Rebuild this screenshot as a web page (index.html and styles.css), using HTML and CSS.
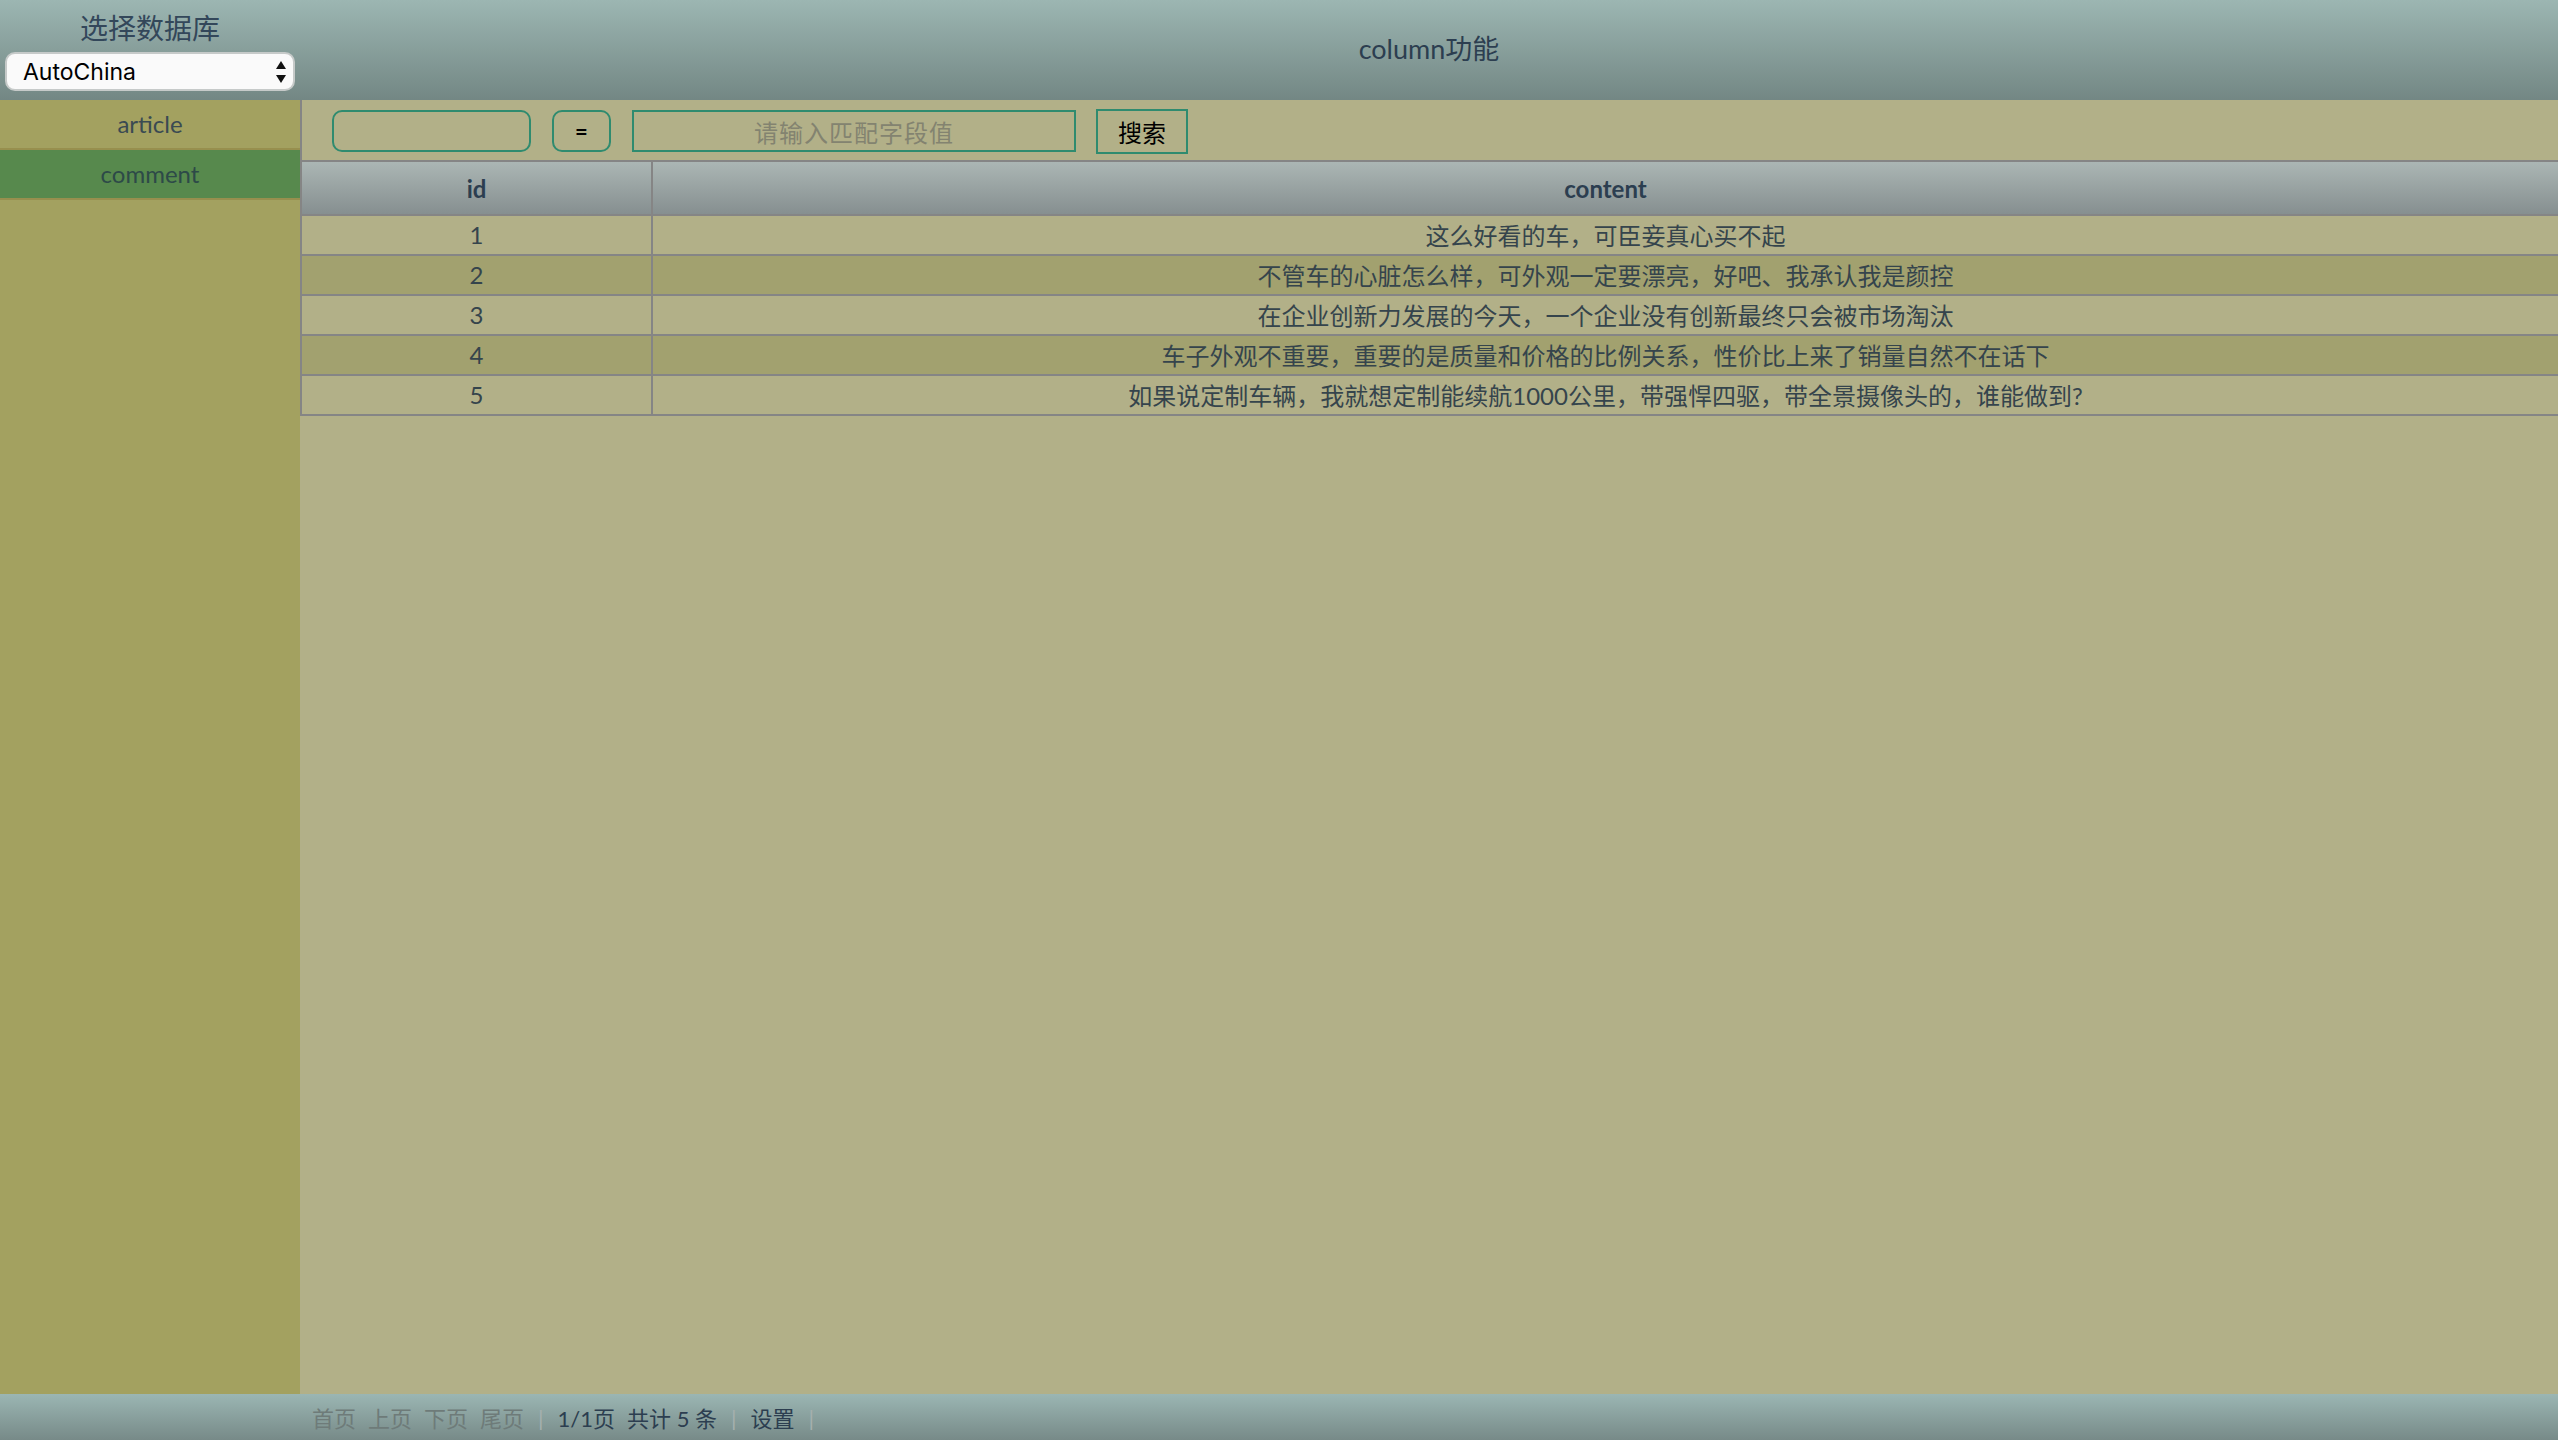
FILE: index.html
```html
<!DOCTYPE html>
<html lang="zh-CN">
<head>
<meta charset="utf-8">
<title>column功能</title>
<link rel="stylesheet" href="styles.css">
</head>
<body>
<div class="app">
  <header class="topbar">
    <div class="db-picker">
      <div class="db-label">选择数据库</div>
      <div class="select-wrap">
        <select class="db-select"><option>AutoChina</option></select>
        <svg class="select-arrows" width="10" height="22" viewBox="0 0 10 22"><polygon points="0,8 5,0 10,8"/><polygon points="0,14 10,14 5,22"/></svg>
      </div>
    </div>
    <h1 class="page-title">column功能</h1>
  </header>
  <div class="content">
    <nav class="sidebar">
      <div class="side-item">article</div>
      <div class="side-item active">comment</div>
    </nav>
    <main class="main">
      <div class="toolbar">
        <input class="field-input" type="text">
        <button class="op-btn">=</button>
        <input class="value-input" type="text" placeholder="请输入匹配字段值">
        <button class="search-btn">搜索</button>
      </div>
      <table class="data-table">
        <thead>
          <tr><th class="col-id">id</th><th>content</th></tr>
        </thead>
        <tbody>
          <tr><td class="col-id">1</td><td>这么好看的车，可臣妾真心买不起</td></tr>
          <tr><td class="col-id">2</td><td>不管车的心脏怎么样，可外观一定要漂亮，好吧、我承认我是颜控</td></tr>
          <tr><td class="col-id">3</td><td>在企业创新力发展的今天，一个企业没有创新最终只会被市场淘汰</td></tr>
          <tr><td class="col-id">4</td><td>车子外观不重要，重要的是质量和价格的比例关系，性价比上来了销量自然不在话下</td></tr>
          <tr><td class="col-id">5</td><td>如果说定制车辆，我就想定制能续航1000公里，带强悍四驱，带全景摄像头的，谁能做到?</td></tr>
        </tbody>
      </table>
    </main>
  </div>
  <footer class="pager">
    <span class="off">首页</span>
    <span class="off">上页</span>
    <span class="off">下页</span>
    <span class="off">尾页</span>
    <span class="sep">|</span>
    <span class="on">1/1页</span>
    <span class="on">共计 5 条</span>
    <span class="sep">|</span>
    <span class="on">设置</span>
    <span class="sep">|</span>
  </footer>
</div>
</body>
</html>
```

FILE: styles.css
```css
html, body {
  margin: 0;
  height: 100%;
}

body {
  font-family: Lato, "Noto Sans CJK SC", sans-serif;
  color: #2c3e50;
}

.app {
  display: flex;
  flex-direction: column;
  height: 100vh;
}

.topbar {
  height: 100px;
  flex: none;
  display: flex;
  background: linear-gradient(#9cb6b2, #738784);
}

.db-picker {
  width: 300px;
  flex: none;
  display: flex;
  flex-direction: column;
  align-items: center;
  padding-top: 8px;
  box-sizing: border-box;
}

.db-label {
  font-size: 28px;
  line-height: 40px;
  color: #33475a;
}

.select-wrap {
  position: relative;
  margin-top: 4px;
  width: 290px;
  height: 39px;
}

.db-select {
  appearance: none;
  -webkit-appearance: none;
  width: 100%;
  height: 100%;
  box-sizing: border-box;
  border: 2px solid #c6cac9;
  border-radius: 10px;
  background: #fafafa;
  color: #000;
  font-family: Inter, "Liberation Sans", sans-serif;
  font-size: 23px;
  padding: 0 0 0 16px;
  outline: none;
}

.select-arrows {
  position: absolute;
  right: 9px;
  top: 9px;
  fill: #111;
  pointer-events: none;
}

.page-title {
  flex: 1;
  margin: 0;
  padding-bottom: 5px;
  display: flex;
  align-items: center;
  justify-content: center;
  font-size: 27px;
  font-weight: 400;
  color: #2c3e50;
}

.content {
  flex: 1;
  display: flex;
  min-height: 0;
}

.sidebar {
  width: 300px;
  flex: none;
  background: #a3a160;
}

.side-item {
  height: 50px;
  line-height: 48px;
  box-sizing: border-box;
  border-bottom: 2px solid #978f4e;
  text-align: center;
  font-size: 24px;
  color: #3a4a52;
}

.side-item.active {
  background: #57894d;
  color: #2d4a48;
}

.main {
  flex: 1;
  min-width: 0;
  background: #b2b088;
  display: flex;
  flex-direction: column;
}

.toolbar {
  height: 62px;
  flex: none;
  box-sizing: border-box;
  border-left: 2px solid #858585;
  border-bottom: 2px solid #858585;
  display: flex;
  align-items: center;
  gap: 21px;
  padding: 2px 0 0 30px;
}

.field-input,
.op-btn,
.value-input,
.search-btn {
  box-sizing: border-box;
  border: 2px solid #2f8b6f;
  background: transparent;
  margin: 0;
  outline: none;
}

.field-input {
  width: 199px;
  height: 42px;
  border-radius: 10px;
}

.op-btn {
  width: 59px;
  height: 42px;
  border-radius: 10px;
  font-family: Lato, sans-serif;
  font-size: 22px;
  font-weight: 700;
  color: #000;
  padding: 0;
}

.value-input {
  width: 444px;
  height: 42px;
  border-radius: 0;
  text-align: center;
  font-family: "Noto Sans CJK SC", sans-serif;
  font-size: 24px;
  letter-spacing: 1px;
}

.value-input::placeholder {
  color: #838370;
}

.search-btn {
  width: 92px;
  height: 45px;
  margin-left: -1px;
  border-radius: 0;
  font-family: "Noto Sans CJK SC", sans-serif;
  font-size: 24px;
  color: #000;
  padding: 0;
}

.data-table {
  width: 100%;
  border-collapse: separate;
  border-spacing: 0;
  border-left: 2px solid #858585;
}

.data-table th {
  height: 54px;
  box-sizing: border-box;
  padding: 0;
  border-bottom: 2px solid #858585;
  background: linear-gradient(#abb6b4, #868f90);
  font-size: 24px;
  font-weight: 700;
  color: #2c3e50;
}

.data-table td {
  height: 40px;
  box-sizing: border-box;
  padding: 0 0 2px;
  border-bottom: 2px solid #858585;
  text-align: center;
  font-size: 24px;
  color: #35444c;
}

.data-table .col-id {
  width: 351px;
  border-right: 2px solid #858585;
}

.data-table tbody tr:nth-child(even) td {
  background: #a2a16f;
}

.pager {
  height: 46px;
  flex: none;
  box-sizing: border-box;
  display: flex;
  align-items: center;
  gap: 12px;
  padding-left: 312px;
  background: linear-gradient(#9bb6b3, #778a88);
  font-size: 22px;
}

.pager .off {
  color: #6e7b79;
}

.pager .on {
  color: #2c3e50;
}

.pager .sep {
  color: #a5b0ae;
  font-size: 22px;
  padding: 0 2px;
}
```
